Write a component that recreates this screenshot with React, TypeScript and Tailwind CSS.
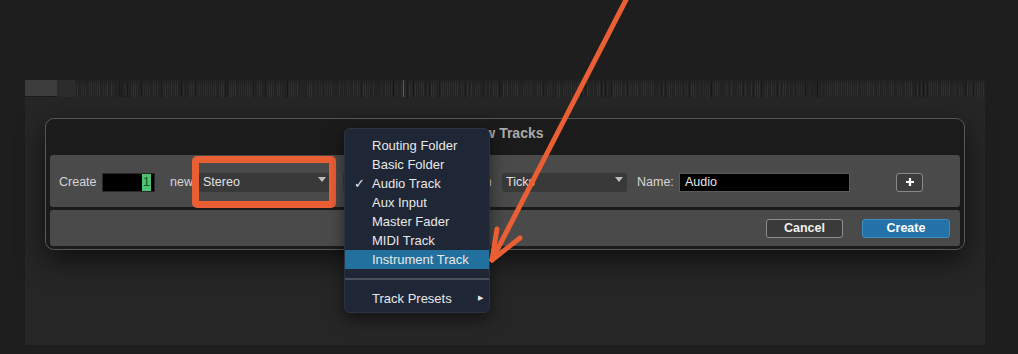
import React from "react";

function Ruler() {
  const lines: React.ReactNode[] = [];
  let seed = 7;
  const rnd = () => {
    seed = (seed * 9301 + 49297) % 233280;
    return seed / 233280;
  };
  for (let x = 0; x < 910; x += 2) {
    const r = rnd();
    if (r < 0.2) continue;
    const shade = r > 0.9 ? "#1a1a1a" : r > 0.55 ? "#313131" : "#2b2b2b";
    lines.push(<rect key={x} x={x} y={1} width={1} height={16} fill={shade} />);
  }
  const majors: React.ReactNode[] = [];
  for (let i = 1; i < 9; i++) {
    majors.push(<rect key={"m" + i} x={i * 106} y={0} width={1} height={17} fill="#141414" />);
  }
  return (
    <svg width="910" height="17" className="block">
      <defs>
        <linearGradient id="fade" x1="0" y1="0" x2="0" y2="1">
          <stop offset="0" stopColor="#1e1e1e" stopOpacity="0.5" />
          <stop offset="0.4" stopColor="#1e1e1e" stopOpacity="0" />
        </linearGradient>
      </defs>
      <rect x="0" y="0" width="910" height="17" fill="#232323" />
      {lines}
      {majors}
      <rect x="0" y="0" width="910" height="17" fill="url(#fade)" />
      <rect x="328" y="0" width="1" height="17" fill="#c0392b" />
    </svg>
  );
}

function Caret() {
  return (
    <svg width="8" height="5" viewBox="0 0 8 5" className="block">
      <path d="M0 0 L8 0 L4 5 Z" fill="#bdbdbd" />
    </svg>
  );
}

function Select({ w, label }: { w: string; label: string }) {
  return (
    <div className={`${w} h-[19px] bg-[#393939] rounded-[3px] flex items-center justify-between pl-[4px] pr-[4px] text-[12.5px] text-[#e2e2e2]`}>
      <span>{label}</span>
      <div className="-mt-[6px]">
        <Caret />
      </div>
    </div>
  );
}

const menuItems = [
  "Routing Folder",
  "Basic Folder",
  "Audio Track",
  "Aux Input",
  "Master Fader",
  "MIDI Track",
  "Instrument Track",
];

export default function App() {
  return (
    <div className="relative w-[1018px] h-[354px] overflow-hidden bg-[#1e1e1e] font-['Liberation_Sans',Arial,sans-serif]">
      <div className="pt-[80px] pl-[25px]">
        <div className="w-[960px] h-[265px] bg-[#262626] flex flex-col">
          <div className="flex h-[17px]">
            <div className="w-[32px] h-[17px] bg-[#3c3c3c] border-b border-[#1a1a1a]" />
            <div className="w-[18px] h-[17px] bg-[#2c2c2c]" />
            <Ruler />
          </div>
          <div className="ml-[20px] mt-[21px] w-[920px] h-[132px] rounded-[9px] border border-[#575757] bg-[#1b1b1b] shadow-[0_10px_28px_rgba(0,0,0,0.6)] flex flex-col px-[4px] pb-[3px]">
            <div className="h-[36px] flex justify-center pt-[6px] text-[14px] leading-[16px] font-bold text-[#a9a9a9]">
              New Tracks
            </div>
            <div className="h-[52px] bg-[#4a4a4a] rounded-[3px] flex items-center pl-[9px] pt-[2px] text-[12.5px] text-[#d6d6d6]">
              <span className="w-[43px]">Create</span>
              <div className="w-[53px] h-[19px] bg-black border border-[#2a2a2a] flex items-center justify-end pr-[3px]">
                <span className="bg-[#4cc474] text-[#17532b] text-[12.5px] leading-[17px] px-[1px]">1</span>
              </div>
              <span className="ml-[15px] w-[29px]">new</span>
              <Select w="w-[131px]" label="Stereo" />
              <div className="ml-[13px]">
                <Select w="w-[128px]" label="" />
              </div>
              <span className="ml-[11px] w-[20px]">in</span>
              <Select w="w-[125px]" label="Ticks" />
              <span className="ml-[10px] w-[42px]">Name:</span>
              <div className="w-[171px] h-[19px] bg-black border border-[#5a5a5a] flex items-center pl-[5px] text-[12.5px] text-[#e6e6e6]">
                Audio
              </div>
              <div className="ml-[46px] w-[27px] h-[19px] rounded-[3px] border-[1.5px] border-[#8a8a8a] bg-[#3d3d3d] flex items-center justify-center">
                <svg width="10" height="10" viewBox="0 0 10 10">
                  <path d="M5 1 V9 M1 5 H9" stroke="#fff" strokeWidth="2.2" />
                </svg>
              </div>
            </div>
            <div className="mt-[3px] h-[36px] bg-[#4a4a4a] rounded-[3px] flex items-center justify-end pr-[10px] pt-[1px]">
              <div className="w-[77px] h-[19px] rounded-[3px] border border-[#8e8e8e] bg-[#3a3a3a] flex items-center justify-center text-[12.5px] font-bold text-[#f0f0f0]">
                Cancel
              </div>
              <div className="ml-[19px] w-[88px] h-[19px] rounded-[3px] border border-[#3d8cc2] bg-[#2373a8] flex items-center justify-center text-[12.5px] font-bold text-white">
                Create
              </div>
            </div>
          </div>
        </div>
      </div>

      {/* orange highlight */}
      <div className="absolute left-[192px] top-[156px] w-[144px] h-[52px] border-[7px] border-[#ea5e33] rounded-[5px]" />

      {/* dropdown menu */}
      <div className="absolute left-[344px] top-[128px] w-[146px] h-[185px] rounded-[6px] bg-[#1f2635] border border-[#2b3242] shadow-[0_6px_16px_rgba(0,0,0,0.5)] pt-[7px] text-[13px] text-[#e8e8e8] overflow-hidden">
        {menuItems.map((m, i) => (
          <div
            key={m}
            className={`relative h-[19px] flex items-center pl-[27px] ${i === 6 ? "bg-[#22709e]" : ""}`}
          >
            {i === 2 && <span className="absolute left-[9px] text-[13px]">✓</span>}
            {m}
          </div>
        ))}
        <div className="h-[20px] flex flex-col">
          <div className="mt-[9px] h-[2px] bg-[#4b505b]" />
        </div>
        <div className="relative h-[19px] flex items-center pl-[27px]">
          Track Presets
          <span className="absolute left-[133px] text-[7px]">▶</span>
        </div>
      </div>

      {/* orange arrow */}
      <svg className="absolute left-0 top-0 pointer-events-none" width="1018" height="354">
        <g stroke="#ea5e33" strokeWidth="5" strokeLinecap="round" fill="none">
          <path d="M628 -4 L492 260" />
          <path d="M492 260 L497 229" />
          <path d="M492 260 L520 238" />
        </g>
      </svg>
    </div>
  );
}
